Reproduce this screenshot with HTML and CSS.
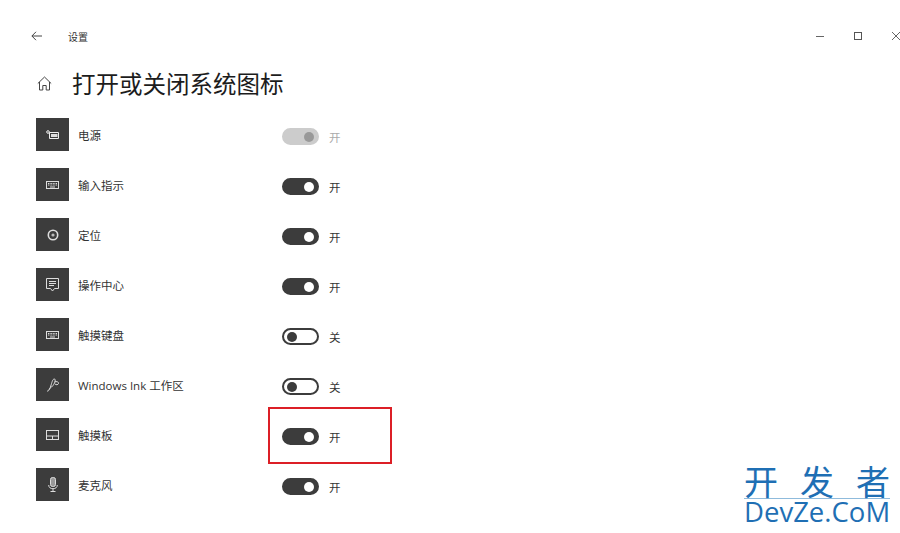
FILE: index.html
```html
<!DOCTYPE html>
<html>
<head>
  <title>设置</title>
  <link rel="stylesheet" href="styles.css">
</head>
<body>
  <!-- barra superior -->
  <div class="titlebar">
    <svg class="back" width="11" height="10" viewBox="0 0 11 10"><path d="M5 .8 .9 5 5 9.200M.9 5H11" fill="none" stroke="#444" stroke-width="1"/></svg>
    <span class="app-name">设置</span>
    <div class="winbtns">
      <svg width="10" height="10" viewBox="0 0 10 10"><path d="M1 5.500H9" stroke="#666" stroke-width="1"/></svg>
      <svg width="10" height="10" viewBox="0 0 10 10"><rect x="1.500" y="1.500" width="7" height="7" fill="none" stroke="#555" stroke-width="1"/></svg>
      <svg width="10" height="10" viewBox="0 0 10 10"><path d="M1 1 9 9M9 1 1 9" stroke="#666" stroke-width="1"/></svg>
    </div>
  </div>

  <div class="heading">
    <svg class="home" width="15" height="15" viewBox="0 0 15 15"><path d="M.8 7.500 7.500 1l6.700 6.500M2.500 6V14H5.800V9.500H9.200V14H12.500V6" fill="none" stroke="#444" stroke-width="1"/></svg>
    <h1>打开或关闭系统图标</h1>
  </div>

  <div class="list">
    <div class="row">
      <div class="tile"><svg width="14" height="9" viewBox="0 0 14 9"><circle cx="2" cy="2" r="1.300" fill="none" stroke="#eee"/><path d="M3.500 2.500H12.500V8.500H3.500Z" fill="none" stroke="#eee"/><path d="M5 4H11.500V7H5Z" fill="#ddd"/></svg></div>
      <span class="name">电源</span>
      <span class="switch disabled"><i></i></span><span class="state muted">开</span>
    </div>
    <div class="row">
      <div class="tile"><svg width="13" height="8" viewBox="0 0 13 8"><rect x=".5" y=".5" width="12" height="7" fill="none" stroke="#ddd"/><path d="M2 2.500H11M2 4H11" stroke="#ddd" stroke-dasharray="1 .6"/><path d="M4 6H9" stroke="#ddd"/></svg></div>
      <span class="name">输入指示</span>
      <span class="switch on"><i></i></span><span class="state">开</span>
    </div>
    <div class="row">
      <div class="tile"><svg width="12" height="12" viewBox="0 0 12 12"><circle cx="6" cy="6" r="4.700" fill="none" stroke="#ddd" stroke-width="1.600"/><circle cx="6" cy="6" r="1.600" fill="#bbb"/></svg></div>
      <span class="name">定位</span>
      <span class="switch on"><i></i></span><span class="state">开</span>
    </div>
    <div class="row">
      <div class="tile"><svg width="13" height="14" viewBox="0 0 13 14"><path d="M.5 .5H12.500V10.500H8.500L6.500 13 4.500 10.500H.5Z" fill="none" stroke="#ddd"/><path d="M3 3.500H10M3 5.500H10M3 7.500H8" stroke="#ddd"/></svg></div>
      <span class="name">操作中心</span>
      <span class="switch on"><i></i></span><span class="state">开</span>
    </div>
    <div class="row">
      <div class="tile"><svg width="13" height="8" viewBox="0 0 13 8"><rect x=".5" y=".5" width="12" height="7" fill="none" stroke="#ddd"/><path d="M2 2.500H11M2 4H11" stroke="#ddd" stroke-dasharray="1 .6"/><path d="M4 6H9" stroke="#ddd"/></svg></div>
      <span class="name">触摸键盘</span>
      <span class="switch"><i></i></span><span class="state">关</span>
    </div>
    <div class="row">
      <div class="tile"><svg width="14" height="14" viewBox="0 0 14 14"><path d="M1 13C2.800 13.500 3.800 11 4.800 8S6.500 1 8.300 1 9 5 7 7.500 3.500 10 2.800 11.500M8.500 4C10.500 3 13 4 12.500 5.500S10 7 9 6" fill="none" stroke="#ddd"/></svg></div>
      <span class="name">Windows Ink 工作区</span>
      <span class="switch"><i></i></span><span class="state">关</span>
    </div>
    <div class="row">
      <div class="tile"><svg width="13" height="10" viewBox="0 0 13 10"><rect x=".5" y=".5" width="12" height="9" fill="none" stroke="#ddd"/><path d="M.5 6H12.500M6.500 6V9.500" stroke="#ddd"/></svg></div>
      <span class="name">触摸板</span>
      <span class="switch on"><i></i></span><span class="state">开</span>
    </div>
    <div class="row">
      <div class="tile"><svg width="10" height="15" viewBox="0 0 10 15"><rect x="2.500" y=".5" width="5" height="9" rx="2" fill="#999" stroke="#ddd"/><path d="M.7 8C.7 10.500 2.500 11.700 5 11.700S9.300 10.500 9.300 8M5 11.700V14.500M2.500 14.500H7.500" fill="none" stroke="#ddd"/></svg></div>
      <span class="name">麦克风</span>
      <span class="switch on"><i></i></span><span class="state">开</span>
    </div>
  </div>

  <!-- recuadro rojo sobre el interruptor -->
  <div class="highlight"></div>

  <div class="watermark">
    <div class="wm-top"><span>开</span><span>发</span><span>者</span></div>
    <div class="wm-bottom">DevZe.CoM</div>
  </div>
</body>
</html>
```

FILE: styles.css
```css
html, body {
  margin: 0;
  height: 533px;
  overflow: hidden;
  background-color: #ffffff;
  font-family: "Open Sans", "Noto Sans CJK SC", sans-serif;
  color: #222222;
}

.titlebar {
  display: flex;
  align-items: center;
  height: 20px;
  padding: 26px 0 0 31px;
}

.back {
  margin-right: 26px;
}

.app-name {
  font-size: 10px;
  color: #333333;
}

.winbtns {
  display: flex;
  gap: 28px;
  margin-left: auto;
  margin-right: -1px;
}

.heading {
  display: flex;
  align-items: center;
  height: 40px;
  margin-top: 17px;
  padding-left: 37px;
}

.home {
  margin-right: 20px;
}

h1 {
  margin: 0;
  font-size: 23.500px;
  font-weight: 400;
  color: #1c1c1c;
}

.list {
  margin-top: 15px;
  padding-left: 36px;
}

.row {
  display: flex;
  align-items: center;
  height: 33px;
  margin-bottom: 17px;
}

.tile {
  display: flex;
  align-items: center;
  justify-content: center;
  flex: none;
  width: 33px;
  height: 33px;
  background-color: #3c3c3c;
}

.name {
  width: 204px;
  margin-left: 9px;
  font-size: 11.500px;
  color: #333333;
}

.switch {
  display: flex;
  align-items: center;
  box-sizing: border-box;
  width: 37px;
  height: 17px;
  margin-top: 4px;
  padding: 0 3px;
  border: 2px solid #3c3c3c;
  border-radius: 9px;
}

.switch i {
  width: 10px;
  height: 10px;
  border-radius: 50%;
  background-color: #3c3c3c;
}

.switch.on {
  justify-content: flex-end;
  background-color: #3c3c3c;
}

.switch.on i {
  background-color: #ffffff;
}

.switch.disabled {
  justify-content: flex-end;
  border-color: #cccccc;
  background-color: #cccccc;
}

.switch.disabled i {
  background-color: #999999;
}

.state {
  margin-top: 4px;
  margin-left: 10px;
  font-size: 11.500px;
  color: #333333;
}

.state.muted {
  color: #aaaaaa;
}

.highlight {
  position: absolute;
  left: 268px;
  top: 407px;
  box-sizing: border-box;
  width: 124px;
  height: 57px;
  border: 2px solid #dc1f26;
}

.watermark {
  position: absolute;
  left: 744px;
  top: 464px;
  width: 146px;
  color: #1f6fb4;
}

.wm-top {
  display: flex;
  justify-content: space-between;
  height: 34px;
  font-size: 34px;
  line-height: 37px;
  border-bottom: 1px solid #8fbbdc;
}

.wm-bottom {
  font-size: 27.500px;
  line-height: 26px;
  white-space: nowrap;
}
```
